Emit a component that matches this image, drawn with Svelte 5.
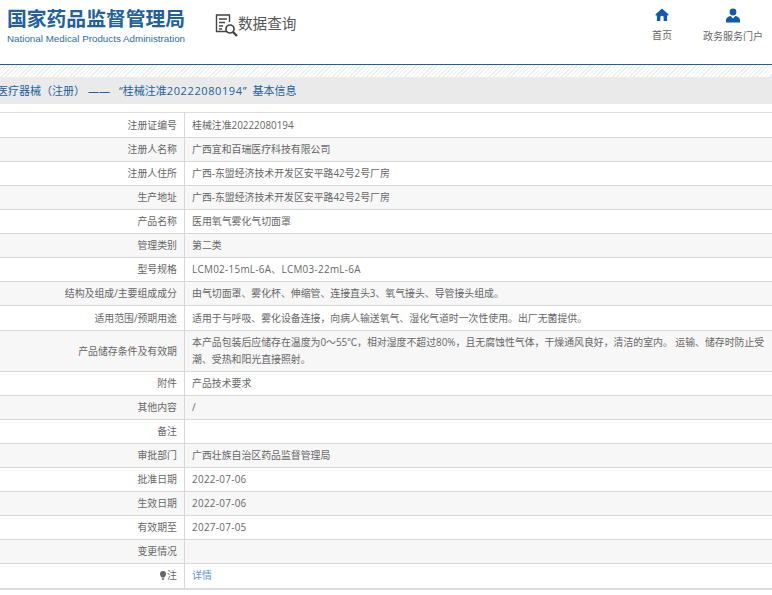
<script>
	const rows = [
		['注册证编号', '桂械注准20222080194'],
		['注册人名称', '广西宜和百瑞医疗科技有限公司'],
		['注册人住所', '广西-东盟经济技术开发区安平路42号2号厂房'],
		['生产地址', '广西-东盟经济技术开发区安平路42号2号厂房'],
		['产品名称', '医用氧气雾化气切面罩'],
		['管理类别', '第二类'],
		['型号规格', 'LCM02-15mL-6A、LCM03-22mL-6A', true],
		['结构及组成/主要组成成分', '由气切面罩、雾化杯、伸缩管、连接直头3、氧气接头、导管接头组成。'],
		['适用范围/预期用途', '适用于与呼吸、雾化设备连接，向病人输送氧气、湿化气道时一次性使用。出厂无菌提供。'],
		['产品储存条件及有效期', '本产品包装后应储存在温度为0～55℃，相对湿度不超过80%，且无腐蚀性气体，干燥通风良好，清洁的室内。 运输、储存时防止受潮、受热和阳光直接照射。'],
		['附件', '产品技术要求'],
		['其他内容', '/'],
		['备注', ''],
		['审批部门', '广西壮族自治区药品监督管理局'],
		['批准日期', '2022-07-06', true],
		['生效日期', '2022-07-06', true],
		['有效期至', '2027-07-05', true],
		['变更情况', '']
	];
</script>

<div class="page">
	<header class="top">
		<div class="logo">
			<div class="logo-cn">国家药品监督管理局</div>
			<div class="logo-en">National Medical Products Administration</div>
		</div>
		<div class="query">
			<svg width="23" height="23" viewBox="0 0 23 23" fill="none" stroke="#444" stroke-width="1.4">
				<path d="M12 17.500H1.500V1H14.500V8" />
				<path d="M4 5h8M4 8.500h6M4 12h4M4 15h3" />
				<circle cx="15" cy="15" r="4" stroke-width="1.700" />
				<path d="M18 18l4 4" stroke-width="2.400" />
			</svg>
			<span>数据查询</span>
		</div>
		<nav class="links">
			<div class="link home">
				<svg width="14" height="14" viewBox="0 0 14 14" fill="#0f5bb0">
					<path d="M7 .5L.6 6.200v1.400h1.300V13h3.400V9.500a1.700 1.700 0 0 1 3.400 0V13h3.400V7.600h1.300V6.200z" />
				</svg>
				<span>首页</span>
			</div>
			<div class="link portal">
				<svg width="14" height="15" viewBox="0 0 14 15" fill="#0f5bb0">
					<circle cx="7" cy="4" r="3.400" />
					<path d="M0 14.500v-2.500c0-2 2-3.600 4.600-4L7 10.500 9.400 8C12 8.400 14 10 14 12v2.500z" />
				</svg>
				<span>政务服务门户</span>
			</div>
		</nav>
	</header>
	<div class="hatch"></div>

	<div class="crumb">
		<span class="c1">医疗器械（注册）</span>
		<span class="c2">——</span>
		<span class="c3">“桂械注准<span class="num">20222080194</span>”</span>
		<span class="c4">基本信息</span>
	</div>

	<table>
		<tbody>
			{#each rows as row, i}
				<tr class:tall={i === 0 || i === 8}>
					<td class="name">{row[0]}</td>
					<td class="val" class:latin={row[2]}>{row[1]}</td>
				</tr>
			{/each}
			<tr class="last">
				<td class="name">
					<svg class="pin" width="6" height="9" viewBox="0 0 6 9" fill="#666">
						<path d="M3 0a3 3 0 0 1 3 3c0 1.500-1 2.500-1.500 3.500h-3C1 5.500 0 4.500 0 3a3 3 0 0 1 3-3zM1.800 7.300h2.400L3.600 9H2.400z" />
					</svg>注
				</td>
				<td class="val"><span class="more">详情</span></td>
			</tr>
		</tbody>
	</table>
</div>

<style>
	:global(body) {
		background: #fff;
		font-family: "Open Sans", "Noto Sans CJK SC", sans-serif;
	}

	.page {
		width: 772px;
		height: 595px;
		overflow: hidden;
		color: #666;
	}

	.top {
		display: flex;
		height: 64px;
		border-bottom: 1px solid #1f5f96;
	}

	.logo {
		margin-left: 7px;
		width: 190px;
		padding-top: 7px;
	}

	.logo-cn {
		font-family: "Liberation Sans", "Noto Sans CJK SC", sans-serif;
		font-size: 19.8px;
		line-height: 24px;
		font-weight: bold;
		color: #22609f;
		white-space: nowrap;
	}

	.logo-en {
		font-family: "Liberation Sans", sans-serif;
		font-size: 9.8px;
		line-height: 14px;
		margin-top: 1px;
		color: #2f6ca6;
		white-space: nowrap;
	}

	.query {
		display: flex;
		align-items: flex-start;
		margin-left: 18px;
		padding-top: 14px;
		color: #555;
		font-size: 14.6px;
		line-height: 20px;
	}

	.query span {
		margin-top: -1px;
	}

	.links {
		display: flex;
		margin-left: auto;
	}

	.link {
		display: flex;
		flex-direction: column;
		align-items: center;
		font-size: 10px;
		color: #666;
		padding-top: 8px;
		gap: 5px;
		white-space: nowrap;
	}

	.home {
		width: 20px;
		margin-right: 31px;
	}

	.portal {
		width: 60px;
		margin-right: 9px;
	}

	.hatch {
		height: 12px;
		background: repeating-linear-gradient(135deg, #e9f0f5 0 1px, #fff 1px 3px);
	}

	.crumb {
		display: flex;
		height: 27px;
		line-height: 27px;
		background: #eaeaea;
		color: #22609f;
		font-size: 11px;
		overflow: hidden;
		white-space: nowrap;
	}

	.c1 {
		margin-left: -3px;
	}

	.c2 {
		margin-left: 3px;
	}

	.c3 {
		margin-left: 9px;
	}

	.num {
		letter-spacing: 0.6px;
	}

	.c4 {
		margin-left: 6px;
	}

	table {
		width: 772px;
		margin-top: 8px;
		border-collapse: collapse;
		border-top: 1px solid #ddd;
		border-bottom: 2px solid #ddd;
		font-size: 9.9px;
		line-height: 17px;
	}

	tr {
		height: 24px;
	}

	tr.tall {
		height: 25px;
	}

	tr.last {
		height: 25px;
	}

	tr:nth-child(even) {
		background: #f7f7f7;
	}

	td {
		border-bottom: 1px solid #d8d8d8;
		padding: 3px 0;
	}

	tr:last-child td {
		border-bottom: 0;
	}

	.name {
		width: 177px;
		padding-right: 7px;
		text-align: right;
		border-right: 1px solid #d8d8d8;
		white-space: nowrap;
	}

	.val {
		padding-left: 7px;
	}

	.latin {
		letter-spacing: 0.3px;
	}

	.pin {
		margin-right: 1px;
		vertical-align: -1px;
	}

	.more {
		color: #5a93dc;
	}
</style>
